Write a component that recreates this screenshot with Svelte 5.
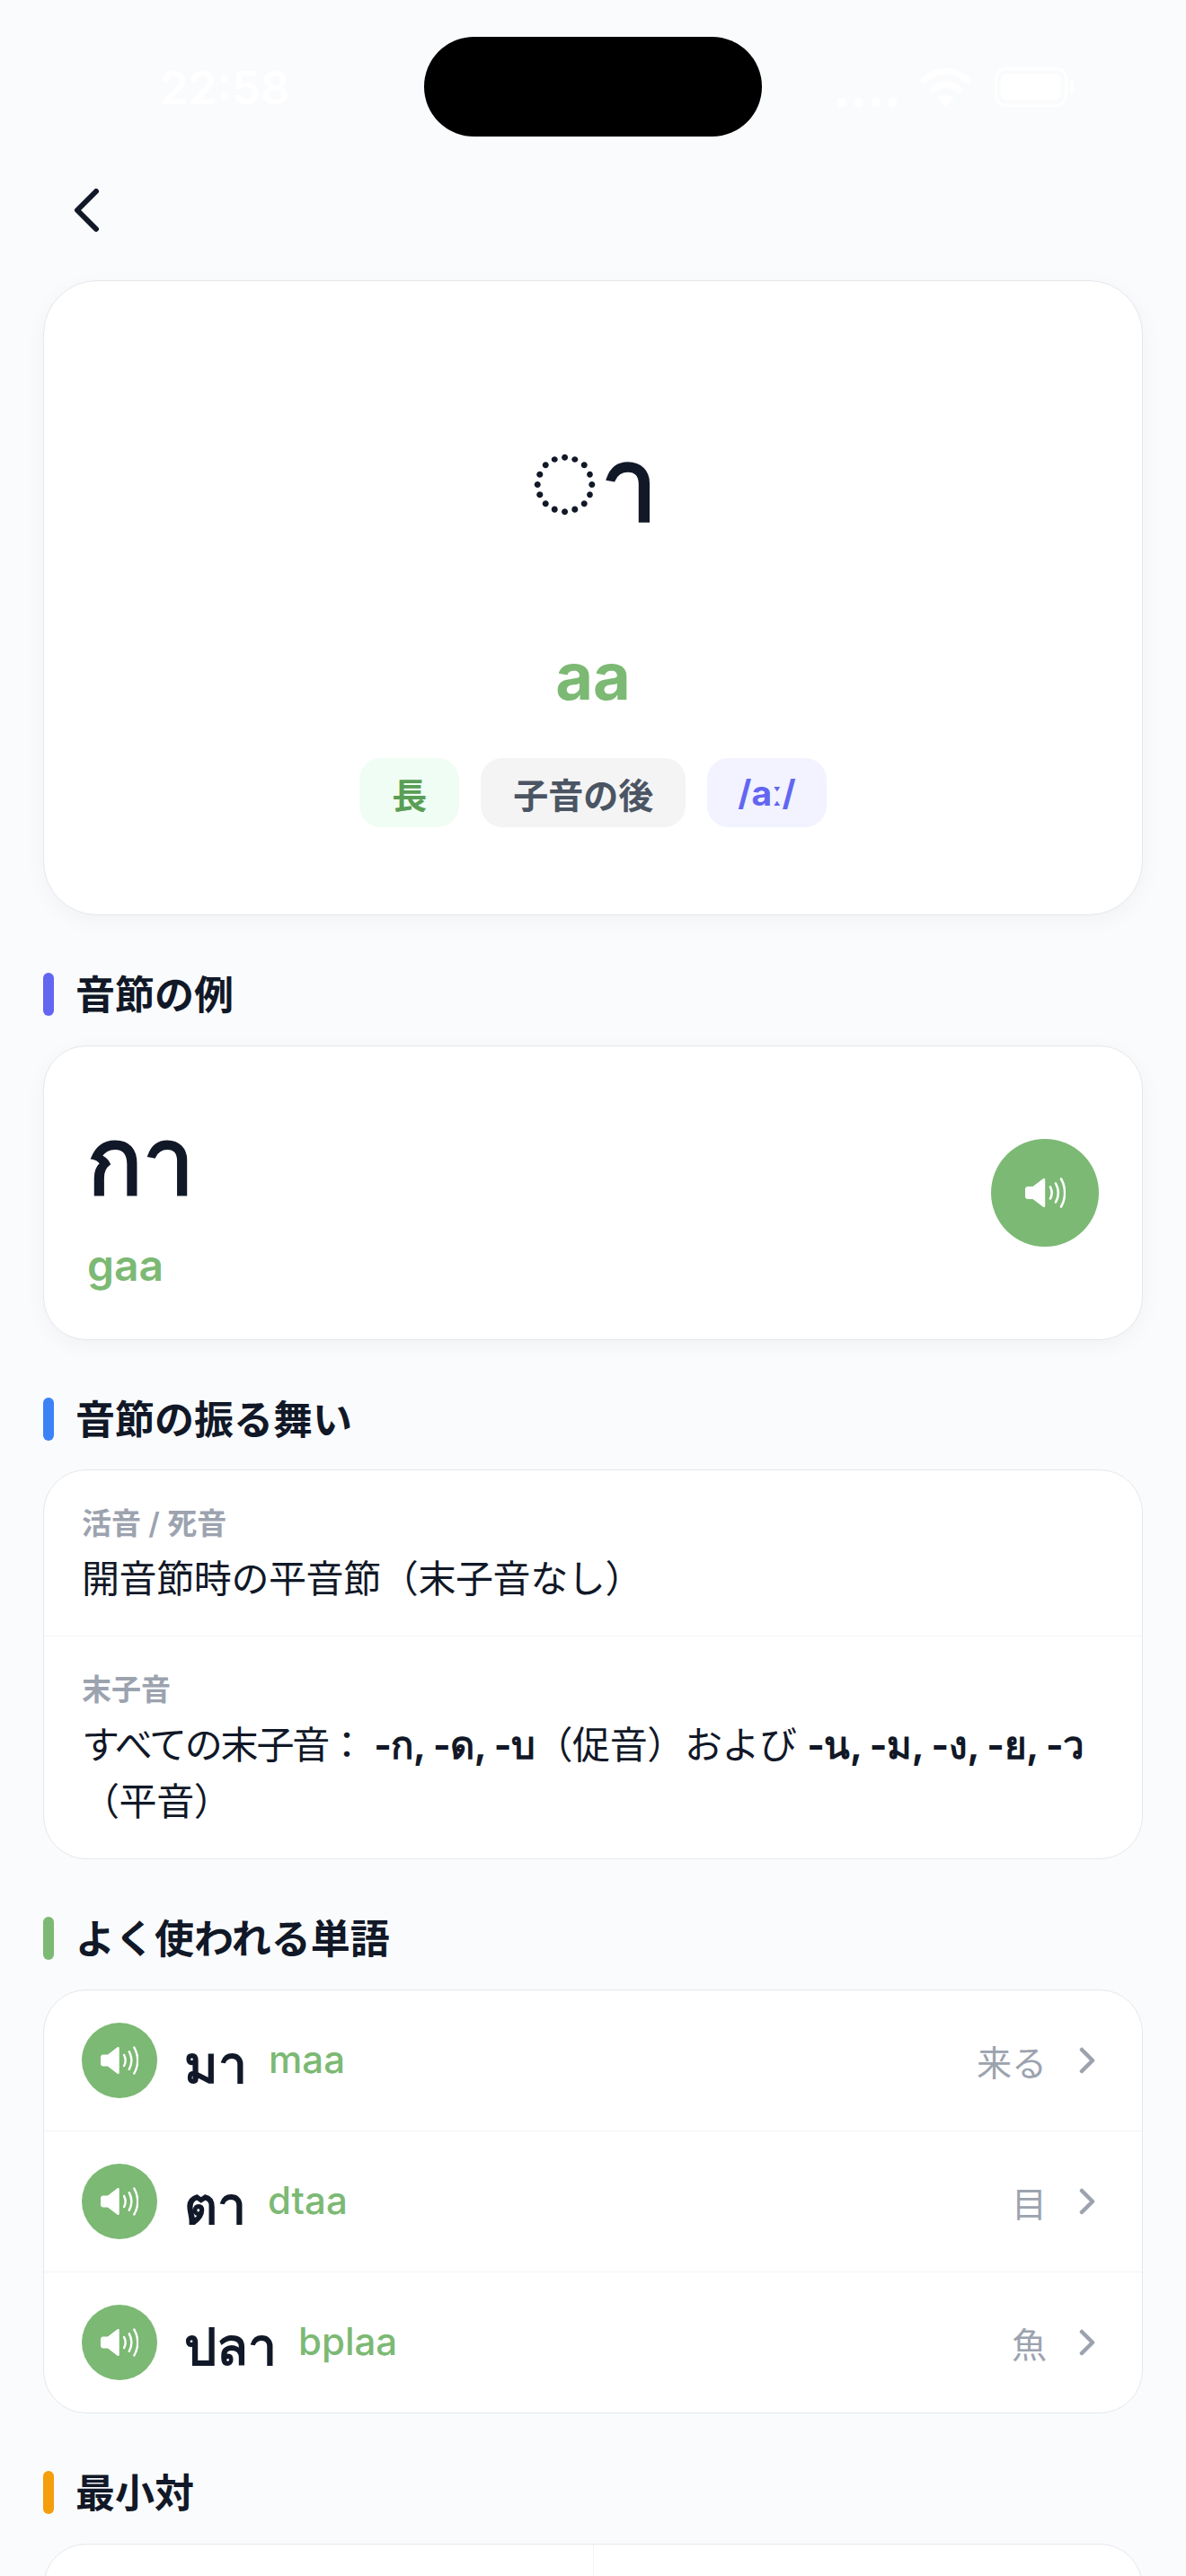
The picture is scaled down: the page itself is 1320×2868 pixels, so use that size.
<script>
  const rules = [
    { label: '活音 / 死音', parts: [{ text: '開音節時の平音節（末子音なし）' }] },
    {
      label: '末子音',
      parts: [
        { text: 'すべての末子音：', tight: true },
        { text: ' ' },
        { text: '-ก, -ด, -บ', thai: true },
        { text: '（促音）および ' },
        { text: '-น, -ม, -ง, -ย, -ว', thai: true },
        { text: '（平音）' }
      ]
    }
  ]

  const words = [
    { thai: 'มา', roman: 'maa', meaning: '来る' },
    { thai: 'ตา', roman: 'dtaa', meaning: '目' },
    { thai: 'ปลา', roman: 'bplaa', meaning: '魚' }
  ]
</script>

{#snippet speaker()}
  <svg class="speaker" viewBox="0 0 45 34" fill="none">
    <path d="M3 10h5.500L20 1.200c1-.7 2.200-.1 2.200 1.100v29.400c0 1.200-1.200 1.800-2.200 1.100L8.500 24H3c-1.700 0-3-1.300-3-3v-8c0-1.700 1.300-3 3-3z" fill="#fff"/>
    <path d="M28 10.500c2 4 2 9 0 13M34 6.500c3.500 6.500 3.500 14.500 0 21M40 1.500c5.500 9.500 5.500 21.500 0 31" stroke="#fff" stroke-width="2.600" stroke-linecap="round"/>
  </svg>
{/snippet}

{#snippet title(color, text)}
  <div class="section-title">
    <span class="bar" style="background: {color}"></span>
    <span class="title-text">{text}</span>
  </div>
{/snippet}

<div class="page">
  <div class="status-bar">
    <span class="time">22:58</span>
    <div class="island"></div>
    <div class="status-icons">
      <svg width="66" height="12" viewBox="0 0 66 12" fill="#fff"><rect x="0" y="2" width="9" height="10" rx="3"/><rect x="19" y="2" width="9" height="10" rx="3"/><rect x="38" y="2" width="9" height="10" rx="3"/><rect x="57" y="2" width="9" height="10" rx="3"/></svg>
      <svg width="57" height="44" viewBox="0 0 57 44" fill="none" stroke="#fff" stroke-width="7" stroke-linecap="round"><path d="M4 15c14-14 35-14 49 0M14 25c8-8 21-8 29 0"/><path d="M28.500 44l-9-10c5-4 13-4 18 0z" fill="#fff" stroke="none"/></svg>
      <svg width="88" height="44" viewBox="0 0 88 44" fill="none"><rect x="1.500" y="1.500" width="78" height="41" rx="11" stroke="#fff" stroke-width="3"/><rect x="7" y="7" width="67" height="30" rx="7" fill="#fff"/><rect x="84" y="15" width="4" height="14" rx="2" fill="#fff"/></svg>
    </div>
  </div>

  <div class="nav">
    <svg width="30" height="48" viewBox="0 0 30 48" fill="none" stroke="#111827" stroke-width="6" stroke-linecap="round" stroke-linejoin="round"><path d="M26 3L5 24l21 21"/></svg>
  </div>

  <div class="card hero">
    <div class="glyph"><span class="dotted">◌</span>า</div>
    <div class="hero-roman">aa</div>
    <div class="tags">
      <span class="tag green">長</span>
      <span class="tag gray">子音の後</span>
      <span class="tag indigo">/aː/</span>
    </div>
  </div>

  {@render title('#6366f1', '音節の例')}
  <div class="card example">
    <div>
      <div class="example-thai">กา</div>
      <div class="example-roman">gaa</div>
    </div>
    <div class="play big">{@render speaker()}</div>
  </div>

  {@render title('#3b82f6', '音節の振る舞い')}
  <div class="card list">
    {#each rules as rule}
      <div class="rule">
        <div class="rule-label">{rule.label}</div>
        <div class="rule-value">
          {#each rule.parts as part}<span class:rule-thai={part.thai} class:tight={part.tight}>{part.text}</span>{/each}
        </div>
      </div>
    {/each}
  </div>

  {@render title('#7cb974', 'よく使われる単語')}
  <div class="card list">
    {#each words as word}
      <div class="word">
        <div class="play small">{@render speaker()}</div>
        <span class="word-thai">{word.thai}</span>
        <span class="word-roman">{word.roman}</span>
        <span class="word-meaning">{word.meaning}</span>
        <svg class="chevron" width="18" height="30" viewBox="0 0 18 30" fill="none" stroke="#9ca3af" stroke-width="4.500" stroke-linecap="round" stroke-linejoin="round"><path d="M3 3l12 12L3 27"/></svg>
      </div>
    {/each}
  </div>

  {@render title('#f59e0b', '最小対')}
  <div class="card pairs">
    <div class="pair"></div>
    <div class="pair"></div>
  </div>
</div>

<style>
  :global(body) {
    margin: 0;
    background: #fafbfd;
  }

  .page {
    position: relative;
    height: 2868px;
    overflow: hidden;
    padding: 0 48px;
    box-sizing: border-box;
    background: #fafbfd;
    font-family: Inter, 'Noto Sans CJK JP', sans-serif;
    color: #111827;
  }

  .status-bar {
    height: 165px;
    display: flex;
    align-items: center;
    justify-content: space-between;
    padding: 0 77px 0 130px;
  }

  .time {
    font-size: 51px;
    font-weight: 600;
    color: #fff;
    margin-top: 30px;
  }

  .island {
    position: absolute;
    left: 472px;
    top: 41px;
    width: 376px;
    height: 111px;
    border-radius: 56px;
    background: #000;
  }

  .status-icons {
    display: flex;
    align-items: flex-end;
    gap: 26px;
    margin-top: 28px;
  }

  .nav {
    height: 147px;
    display: flex;
    align-items: center;
    padding: 0 0 9px 33px;
    box-sizing: border-box;
  }

  .card {
    background: #fff;
    border: 1px solid #e5e7eb;
    border-radius: 48px;
    box-sizing: border-box;
  }

  .hero {
    height: 707px;
    display: flex;
    flex-direction: column;
    align-items: center;
    border-radius: 60px;
    box-shadow: 0 6px 24px rgba(0, 0, 0, 0.04);
  }

  .glyph {
    font-size: 112px;
    line-height: 180px;
    font-weight: 700;
    margin-top: 135px;
  }

  .dotted {
    font-family: 'Noto Sans', sans-serif;
    font-size: 136px;
    line-height: 1px;
    font-weight: 700;
  }

  .hero-roman {
    font-size: 72px;
    font-weight: 700;
    line-height: 90px;
    margin-top: 80px;
    color: #7cb974;
  }

  .tags {
    display: flex;
    gap: 24px;
    margin-top: 46px;
  }

  .tag {
    height: 77px;
    display: flex;
    align-items: center;
    padding: 0 36px;
    border-radius: 24px;
    font-size: 39px;
    font-weight: 600;
  }

  .green {
    background: #f0fdf4;
    color: #5a9e55;
  }

  .gray {
    background: #f4f4f5;
    color: #4b5563;
  }

  .indigo {
    padding: 0 34px;
    background: #f2f3ff;
    color: #6366f1;
    font-weight: 700;
  }

  .section-title {
    display: flex;
    align-items: center;
    gap: 24px;
    height: 48px;
    margin: 64px 0 32.670px;
    font-size: 44px;
    font-weight: 700;
  }

  .title-text {
    margin-top: -4px;
  }

  .bar {
    width: 12px;
    height: 48px;
    border-radius: 6px;
  }

  .example {
    height: 328px;
    display: flex;
    align-items: center;
    justify-content: space-between;
    padding: 0 48px;
    box-shadow: 0 6px 24px rgba(0, 0, 0, 0.04);
  }

  .example-thai {
    font-size: 102px;
    line-height: 150px;
    font-weight: 700;
  }

  .example-roman {
    font-size: 48px;
    font-weight: 600;
    line-height: 60px;
    margin-top: 12px;
    color: #7cb974;
  }

  .play {
    flex-shrink: 0;
    display: flex;
    align-items: center;
    justify-content: center;
    border-radius: 50%;
    background: #7cb974;
  }

  .big {
    width: 120px;
    height: 120px;
  }

  .big .speaker {
    width: 45px;
    height: 34px;
  }

  .small {
    width: 84px;
    height: 84px;
  }

  .small .speaker {
    width: 42px;
    height: 32px;
  }

  .rule {
    padding: 38px 42px 32px;
  }

  .rule + .rule {
    border-top: 1px solid #f3f4f6;
  }

  .rule-label {
    font-size: 33px;
    font-weight: 600;
    line-height: 42px;
    margin-bottom: 9px;
    color: #9ca3af;
  }

  .rule-value {
    font-size: 42px;
    line-height: 63px;
    letter-spacing: -0.4px;
  }

  .rule-thai {
    font-weight: 700;
  }

  .tight {
    letter-spacing: -2.200px;
  }

  .word {
    display: flex;
    align-items: center;
    padding: 36px 52px 36px 42px;
  }

  .word + .word {
    border-top: 1px solid #f3f4f6;
  }

  .word-thai {
    margin: 10px 0 0 30px;
    font-size: 57px;
    line-height: 72px;
    font-weight: 600;
  }

  .word-roman {
    margin: 0 0 3px 24px;
    font-size: 42px;
    font-weight: 500;
    color: #7cb974;
  }

  .word-meaning {
    margin-left: auto;
    font-size: 39px;
    color: #9ca3af;
  }

  .chevron {
    margin-left: 36px;
  }

  .pairs {
    display: grid;
    grid-template-columns: 1fr 1fr;
    height: 300px;
  }

  .pair + .pair {
    border-left: 1px solid #f3f4f6;
  }
</style>
